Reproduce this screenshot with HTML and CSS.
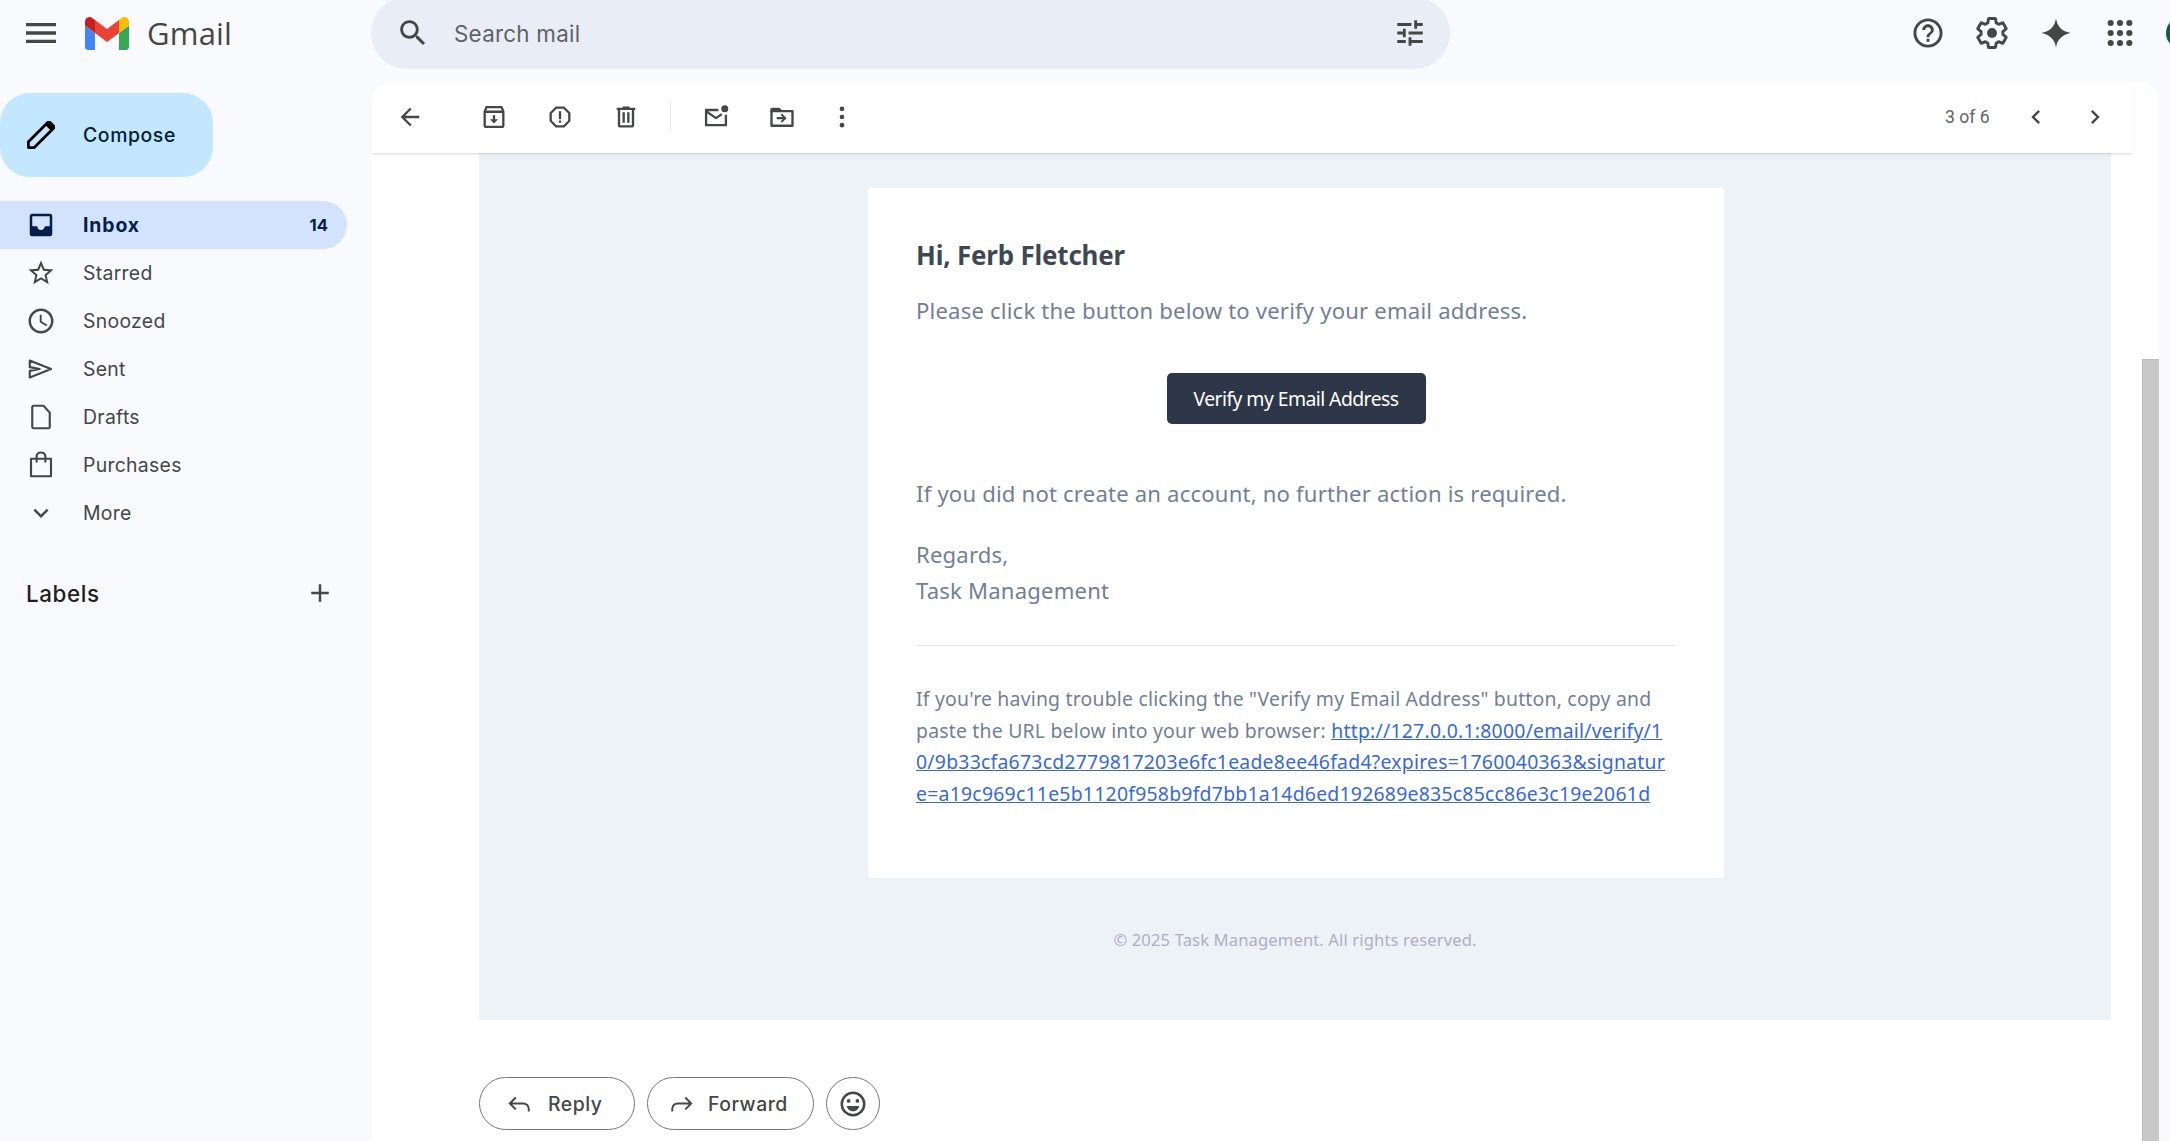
FILE: index.html
```html
<!DOCTYPE html>
<html lang="en">
<head>
<meta charset="utf-8">
<title>Gmail</title>
<link rel="stylesheet" href="styles.css">
</head>
<body>
<header class="topbar">
  <div class="brand">
    <svg class="ic ic-menu" viewBox="0 0 24 24"><path d="M3 18h18v-2H3v2zm0-5h18v-2H3v2zm0-7v2h18V6H3z"/></svg>
    <svg class="logo" viewBox="52 42 88 66"><path fill="#4285f4" d="M58 108h14V74L52 59v43c0 3.32 2.69 6 6 6"/><path fill="#34a853" d="M120 108h14c3.32 0 6-2.69 6-6V59l-20 15"/><path fill="#fbbc04" d="M120 48v26l20-15v-8c0-7.42-8.47-11.65-14.4-7.2"/><path fill="#ea4335" d="M72 74V48l24 18 24-18v26L96 92"/><path fill="#c5221f" d="M52 51v8l20 15V48l-5.6-4.2c-5.94-4.45-14.4-.22-14.4 7.2"/></svg>
    <span class="wordmark">Gmail</span>
  </div>
  <div class="search">
    <svg class="ic ic-search" viewBox="0 0 24 24"><path d="M15.5 14h-.79l-.28-.27C15.41 12.59 16 11.11 16 9.5 16 5.91 13.09 3 9.5 3S3 5.91 3 9.5 5.91 16 9.5 16c1.61 0 3.09-.59 4.23-1.57l.27.28v.79l5 4.99L20.49 19l-4.99-5zm-6 0C7.01 14 5 11.99 5 9.5S7.01 5 9.5 5 14 7.01 14 9.5 11.99 14 9.5 14z"/></svg>
    <span class="search-text">Search mail</span>
    <svg class="ic ic-tune" viewBox="0 0 24 24"><path d="M3 17v2h6v-2H3zM3 5v2h10V5H3zm10 16v-2h8v-2h-8v-2h-2v6h2zM7 9v2H3v2h4v2h2V9H7zm14 4v-2H11v2h10zm-6-4h2V7h4V5h-4V3h-2v6z"/></svg>
  </div>
  <div class="top-actions">
    <svg class="ic ic-top" viewBox="1 1 22 22"><path d="M11 18h2v-2h-2v2zm1-16C6.48 2 2 6.48 2 12s4.48 10 10 10 10-4.48 10-10S17.52 2 12 2zm0 18c-4.41 0-8-3.59-8-8s3.59-8 8-8 8 3.59 8 8-3.59 8-8 8zm0-14c-2.21 0-4 1.79-4 4h2c0-1.1.9-2 2-2s2 .9 2 2c0 2-3 1.75-3 5h2c0-2.25 3-2.5 3-5 0-2.21-1.79-4-4-4z"/></svg>
    <svg class="ic ic-top" viewBox="1 1 22 22"><path class="outline" d="M19.43 12.98c.04-.32.07-.64.07-.98s-.03-.66-.07-.98l2.11-1.65c.19-.15.24-.42.12-.64l-2-3.46c-.12-.22-.39-.3-.61-.22l-2.49 1c-.52-.4-1.08-.73-1.69-.98l-.38-2.65C14.46 2.18 14.25 2 14 2h-4c-.25 0-.46.18-.49.42l-.38 2.65c-.61.25-1.17.59-1.69.98l-2.49-1c-.23-.09-.49 0-.61.22l-2 3.46c-.13.22-.07.49.12.64l2.11 1.65c-.04.32-.07.65-.07.98s.03.66.07.98l-2.11 1.65c-.19.15-.24.42-.12.64l2 3.46c.12.22.39.3.61.22l2.49-1c.52.4 1.08.73 1.69.98l.38 2.65c.03.24.24.42.49.42h4c.25 0 .46-.18.49-.42l.38-2.65c.61-.25 1.17-.59 1.69-.98l2.49 1c.23.09.49 0 .61-.22l2-3.46c.12-.22.07-.49-.12-.64l-2.11-1.65z"/><circle cx="12" cy="12" r="3.4"/></svg>
    <svg class="ic ic-top" viewBox="-1 -1 26 26"><path d="M12 0C12.7 6.4 17.2 11 24 12 17.2 13 12.7 17.6 12 24 11.3 17.6 6.8 13 0 12 6.8 11 11.3 6.4 12 0z"/></svg>
    <svg class="ic ic-top" viewBox="0 0 24 24"><circle cx="5" cy="4.5" r="2.3"/><circle cx="12" cy="4.5" r="2.3"/><circle cx="19" cy="4.5" r="2.3"/><circle cx="5" cy="12" r="2.3"/><circle cx="12" cy="12" r="2.3"/><circle cx="19" cy="12" r="2.3"/><circle cx="5" cy="19.5" r="2.3"/><circle cx="12" cy="19.5" r="2.3"/><circle cx="19" cy="19.5" r="2.3"/></svg>
    <span class="avatar"></span>
  </div>
</header>
<div class="workspace">
  <aside class="sidebar">
    <div class="compose">
      <svg class="ic ic-pencil" viewBox="2 2 20 20"><path class="outline" d="M3 21v-4.2L16.6 3.2a1.4 1.4 0 0 1 2 0l2.2 2.2a1.4 1.4 0 0 1 0 2L7.2 21z"/><path d="M15 4.8l4.2 4.2 1.6-1.6a1.4 1.4 0 0 0 0-2l-2.2-2.2a1.4 1.4 0 0 0-2 0z"/></svg>
      <span>Compose</span>
    </div>
    <nav class="nav">
      <div class="nav-row active">
        <svg class="ic ic-nav" viewBox="0 0 24 24"><path d="M19 3H5a2 2 0 0 0-2 2v14a2 2 0 0 0 2 2h14a2 2 0 0 0 2-2V5a2 2 0 0 0-2-2zm0 10h-4c0 1.66-1.35 3-3 3s-3-1.34-3-3H5V5h14v8z"/></svg>
        <span class="nav-label">Inbox</span><span class="count">14</span>
      </div>
      <div class="nav-row">
        <svg class="ic ic-nav" viewBox="0 0 24 24"><path d="M22 9.24l-7.19-.62L12 2 9.19 8.63 2 9.24l5.46 4.73L5.82 21 12 17.27 18.18 21l-1.63-7.03L22 9.24zM12 15.4l-3.76 2.27 1-4.28-3.32-2.88 4.38-.38L12 6.1l1.71 4.04 4.38.38-3.32 2.88 1 4.28L12 15.4z"/></svg>
        <span class="nav-label">Starred</span>
      </div>
      <div class="nav-row">
        <svg class="ic ic-nav" viewBox="0 0 24 24"><path d="M11.99 2C6.47 2 2 6.48 2 12s4.47 10 9.99 10C17.52 22 22 17.52 22 12S17.52 2 11.99 2zM12 20c-4.42 0-8-3.58-8-8s3.58-8 8-8 8 3.58 8 8-3.58 8-8 8zm.5-13H11v6l5.25 3.15.75-1.23-4.5-2.67z"/></svg>
        <span class="nav-label">Snoozed</span>
      </div>
      <div class="nav-row">
        <svg class="ic ic-nav" viewBox="0 0 24 24"><path class="outline" d="M3 5.200 20 12 3 18.800v-5.300l8-1.500-8-1.500z"/></svg>
        <span class="nav-label">Sent</span>
      </div>
      <div class="nav-row">
        <svg class="ic ic-nav" viewBox="0 0 24 24"><path class="outline" d="M6 3h8l5 5.500V20a1 1 0 0 1-1 1H6a1 1 0 0 1-1-1V4a1 1 0 0 1 1-1z"/></svg>
        <span class="nav-label">Drafts</span>
      </div>
      <div class="nav-row">
        <svg class="ic ic-nav" viewBox="0 0 24 24"><path class="outline" d="M4 7h16v14H4zM8.500 10V5a3.500 3 0 0 1 7 0v5"/></svg>
        <span class="nav-label">Purchases</span>
      </div>
      <div class="nav-row">
        <svg class="ic ic-nav" viewBox="0 0 24 24"><path d="M7.41 8.59L12 13.17l4.59-4.58L18 10l-6 6-6-6z"/></svg>
        <span class="nav-label">More</span>
      </div>
    </nav>
    <div class="labels">
      <span>Labels</span>
      <svg class="ic ic-plus" viewBox="0 0 24 24"><path d="M19 13h-6v6h-2v-6H5v-2h6V5h2v6h6v2z"/></svg>
    </div>
  </aside>
  <main class="panel">
    <div class="toolbar">
      <svg class="ic tb tb-back" viewBox="0 0 24 24"><path d="M20 11H7.83l5.59-5.59L12 4l-8 8 8 8 1.41-1.41L7.83 13H20v-2z"/></svg>
      <svg class="ic tb tb-first" viewBox="0 0 24 24"><path class="outline" d="M4 7.500h16V19a1.500 1.500 0 0 1-1.500 1.500h-13A1.500 1.500 0 0 1 4 19zM5.500 3.500h13L20 7.500H4z"/><path d="M11 10.500h2v3.500h2.500L12 17.500 8.500 14H11z"/></svg>
      <svg class="ic tb" viewBox="0 0 24 24"><path d="M15.730 3H8.270L3 8.270v7.460L8.270 21h7.460L21 15.730V8.270L15.730 3zM19 14.900L14.900 19H9.100L5 14.900V9.100L9.100 5h5.800L19 9.100v5.800z"/><path d="M11 7h2v7h-2zM11 15h2v2h-2z"/></svg>
      <svg class="ic tb" viewBox="0 0 24 24"><path d="M15 4V3H9v1H4v2h1v13c0 1.100.9 2 2 2h10c1.100 0 2-.9 2-2V6h1V4h-5zm2 15H7V6h10v13zM9 8h2v9H9zm4 0h2v9h-2z"/></svg>
      <span class="tb-divider"></span>
      <svg class="ic tb" viewBox="0 0 24 24"><path class="outline" d="M14 6H3.500v13h17v-9M3.500 7l8.500 6 5-3.500"/><circle cx="19.500" cy="5" r="3"/></svg>
      <svg class="ic tb" viewBox="0 0 24 24"><path class="outline" d="M3 7h18v12.500H3z"/><path d="M2 5.500A1.500 1.500 0 0 1 3.500 4H10l2 2.500v1H2zM12 9l4 4-4 4-1.200-1.200 1.900-1.900H7.500v-1.800h5.200l-1.900-1.900z"/></svg>
      <svg class="ic tb tb-more" viewBox="0 0 24 24"><circle cx="12" cy="5" r="2"/><circle cx="12" cy="12" r="2"/><circle cx="12" cy="19" r="2"/></svg>
      <span class="pager">3 of 6</span>
      <svg class="ic tb tb-chev" viewBox="0 0 24 24"><path d="M15.410 7.410L14 6l-6 6 6 6 1.410-1.410L10.830 12z"/></svg>
      <svg class="ic tb tb-chev" viewBox="0 0 24 24"><path d="M10 6L8.590 7.410 13.170 12l-4.580 4.590L10 18l6-6z"/></svg>
    </div>
    <div class="panel-body">
      <div class="message">
        <section class="email">
          <article class="card">
            <h1 class="greeting">Hi, Ferb Fletcher</h1>
            <p class="para">Please click the button below to verify your email address.</p>
            <div class="cta-row"><a class="cta">Verify my Email Address</a></div>
            <p class="para para-after">If you did not create an account, no further action is required.</p>
            <p class="para para-sign">Regards,<br>Task Management</p>
            <hr class="rule">
            <p class="sub">If you're having trouble clicking the "Verify my Email Address" button, copy and<br>paste the URL below into your web browser: <a class="link">http://127.0.0.1:8000/email/verify/1<br>0/9b33cfa673cd2779817203e6fc1eade8ee46fad4?expires=1760040363&amp;signatur<br>e=a19c969c11e5b1120f958b9fd7bb1a14d6ed192689e835c85cc86e3c19e2061d</a></p>
          </article>
          <p class="legal">© 2025 Task Management. All rights reserved.</p>
        </section>
        <div class="actions">
          <button class="pill pill-reply"><svg class="ic ic-act" viewBox="0 0 24 24"><path class="outline-thin" d="M9 6 3.500 11.500 9 17M3.500 11.500H16a5 5 0 0 1 5 5V19"/></svg>Reply</button>
          <button class="pill pill-forward"><svg class="ic ic-act" viewBox="0 0 24 24"><path class="outline-thin" d="M15 6l5.500 5.500L15 17M20.500 11.500H8a5 5 0 0 0-5 5V19"/></svg>Forward</button>
          <button class="pill-round"><svg class="ic ic-emoji" viewBox="0 0 24 24"><path d="M12 2a10 10 0 1 0 0 20 10 10 0 0 0 0-20zm0 18a8 8 0 1 1 0-16 8 8 0 0 1 0 16z"/><circle cx="8.500" cy="9.500" r="1.500"/><circle cx="15.500" cy="9.500" r="1.500"/><path d="M7 13.500h10c-.6 2.600-2.700 4.300-5 4.300s-4.400-1.700-5-4.300z"/></svg></button>
        </div>
      </div>
      <div class="scrollbar"><div class="thumb"></div></div>
    </div>
  </main>
</div>
</body>
</html>
```
FILE: styles.css
```css
* { box-sizing: border-box; }
html, body { margin: 0; height: 100%; }
body {
  width: 2170px; height: 1141px; overflow: hidden;
  background: #f8fafd;
  font-family: Inter, Roboto, sans-serif;
  color: #444746;
  display: flex; flex-direction: column;
}
.ic { fill: #444746; flex: none; display: block; }
.outline { fill: none; stroke: #444746; stroke-width: 2; stroke-linejoin: round; }
.outline-thin { fill: none; stroke: #444746; stroke-width: 1.8; }

.topbar { height: 81px; flex: none; display: flex; align-items: flex-start; }
.brand { width: 371px; flex: none; height: 66px; display: flex; align-items: center; padding-left: 21px; }
.ic-menu { width: 40px; height: 40px; }
.logo { width: 44px; height: 33px; margin-left: 24px; }
.wordmark { margin-left: 18px; font: 400 31px "Open Sans", Roboto, sans-serif; color: #444746; letter-spacing: .2px; }
.search {
  width: 1079px; height: 72px; margin-top: -3px; border-radius: 36px; background: #e9eef6;
  display: flex; align-items: center; padding: 0 23px 0 25px; flex: none;
}
.ic-search { width: 34px; height: 34px; }
.search-text { margin-left: 24px; font-size: 22.4px; color: #5f6368; flex: 1; letter-spacing: .25px; }
.ic-tune { width: 34px; height: 34px; }
.top-actions { flex: 1; display: flex; align-items: center; height: 66px; padding-left: 462px; }
.ic-top { width: 32px; height: 32px; margin-right: 32px; }
.avatar { width: 32px; height: 32px; border-radius: 50%; background: #0b5d4e; margin-left: -2px; flex: none; }

.workspace { flex: 1; display: flex; min-height: 0; }
.sidebar { width: 371px; flex: none; padding-top: 12px; }
.compose {
  width: 213px; height: 84px; border-radius: 30px; background: #c2e7ff;
  display: flex; align-items: center; padding-left: 27px; gap: 28px;
  font-size: 19.4px; font-weight: 500; color: #001d35; letter-spacing: .6px;
}
.ic-pencil { width: 28px; height: 28px; }
.ic-pencil .outline { stroke: #000; }
.ic-pencil path { fill: #000; }
.ic-pencil path.outline { fill: none; }
.nav { margin-top: 24px; }
.nav-row {
  width: 347px; height: 48px; border-radius: 0 24px 24px 0;
  display: flex; align-items: center; padding: 0 19px 0 26px;
  font-size: 19.4px; color: #444746; letter-spacing: .3px;
}
.nav-row.active { background: #d3e3fd; color: #041e49; font-weight: 700; letter-spacing: .9px; }
.nav-row.active .ic { fill: #041e49; }
.ic-nav { width: 30px; height: 30px; }
.ic-nav .outline { stroke-width: 1.7; }
.nav-label { margin-left: 27px; flex: 1; }
.count { font-size: 16.6px; font-weight: 700; letter-spacing: 0; }
.labels {
  display: flex; align-items: center; justify-content: space-between;
  height: 40px; margin-top: 36px; padding: 0 20px 0 26px;
  font-size: 22.4px; font-weight: 500; color: #1f1f1f; width: 355px; letter-spacing: .6px;
}
.ic-plus { width: 30px; height: 30px; }

.panel { width: 1788px; flex: none; background: #fff; border-radius: 22px 22px 0 0; display: flex; flex-direction: column; min-height: 0; }
.toolbar {
  height: 72px; width: 1762px; flex: none; display: flex; align-items: center;
  padding-left: 25px; position: relative; z-index: 1; background: #fff; border-radius: 22px 0 0 0;
  box-shadow: 0 2px 3px -1px rgba(60, 64, 67, .22);
}
.tb { width: 28px; height: 28px; margin-right: 38px; }
.tb-back { margin-right: 56px; }
.tb-divider { width: 1px; height: 30px; background: #e6e8eb; margin: 0 31px 0 -8px; flex: none; }
.tb-more { margin-right: 0; margin-left: -6px; }
.pager { margin-left: 1089px; width: 44px; font-size: 17.6px; color: #5f6368; white-space: nowrap; font-family: Roboto, sans-serif; }
.tb-chev { margin-right: 0; margin-left: 33px; }
.tb-chev + .tb-chev { margin-left: 31px; }

.panel-body { flex: 1; display: flex; min-height: 0; }
.message { width: 1771px; flex: none; padding-left: 108px; }
.email { width: 1632px; height: 867px; background: #edf2f7; padding-top: 35px; display: flex; flex-direction: column; align-items: center; }
.card {
  width: 856px; height: 690px; flex: none; background: #fff; border-radius: 3px; padding: 48px 48px 0;
  margin-left: 2px; font-family: "Noto Sans", sans-serif;
}
.greeting { margin: 0; font-size: 25.9px; line-height: 38px; font-weight: 700; color: #3d4852; letter-spacing: -.17px; }
.para { margin: 18px 0 0; font-size: 22.1px; line-height: 36px; color: #718096; letter-spacing: .19px; }
.cta-row { margin-top: 45px; display: flex; justify-content: center; }
.cta {
  width: 259px; height: 51px; border-radius: 5px; background: #2d3748; color: #fff;
  display: flex; align-items: center; justify-content: center;
  font-size: 19.4px; letter-spacing: -.57px; white-space: nowrap;
}
.para-after { margin-top: 51px; }
.para-sign { margin-top: 25px; }
.rule { margin: 37px 0 0; border: 0; border-top: 1px solid #e8e5ef; height: 1px; }
.sub { margin: 37px 0 0; font-size: 19.4px; line-height: 31.7px; color: #718096; letter-spacing: .21px; white-space: nowrap; }
.link { color: #3869d4; text-decoration: underline; letter-spacing: .25px; }
.legal { margin: 47px 0 0; font: 16.6px/30px "Noto Sans", sans-serif; color: #b0adc5; letter-spacing: .12px; }

.actions { display: flex; margin-top: 57px; }
.pill, .pill-round {
  height: 53px; border: 1px solid #747775; border-radius: 27px; background: #fff;
  display: flex; align-items: center; font: 500 19.4px Inter, sans-serif; color: #444746; padding: 0; flex: none; letter-spacing: .5px;
}
.pill-reply { width: 156px; padding-left: 26px; gap: 16px; }
.pill-forward { width: 167px; margin-left: 12px; padding-left: 21px; gap: 13px; }
.pill-round { width: 54px; margin-left: 12px; justify-content: center; }
.ic-act { width: 26px; height: 26px; }
.ic-emoji { width: 30px; height: 30px; }

.scrollbar { width: 17px; flex: none; padding-top: 206px; }
.thumb { height: 782px; background: #c8c8c8; border-left: 1px solid #bbb; border-top: 1px solid #bbb; }
```
